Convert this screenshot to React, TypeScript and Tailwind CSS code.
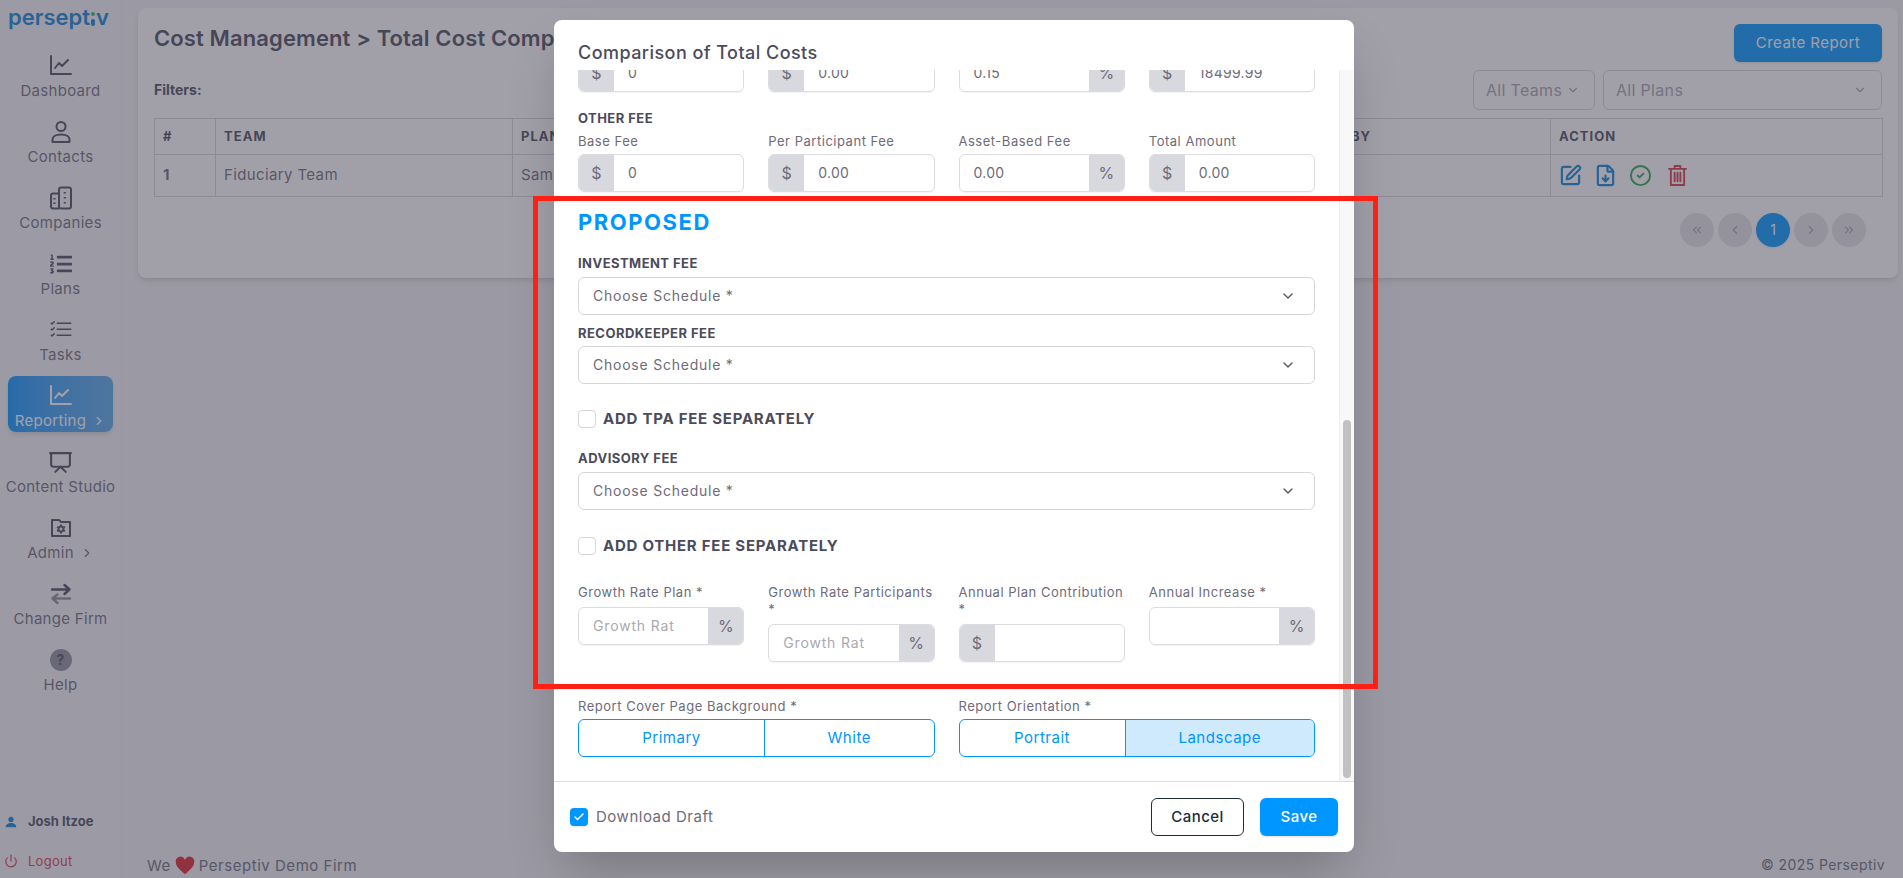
import { ReactNode } from 'react';
import { ChevronDown, ChevronRight, ChevronLeft, ChevronsLeft, ChevronsRight, Check, Power, Presentation, FileDown, CircleCheck, SquarePen } from 'lucide-react';
import { BsListCheck, BsPersonFill } from 'react-icons/bs';
import { FaListOl } from 'react-icons/fa';
import { RiFolderSettingsLine } from 'react-icons/ri';

function ChartIcon() {
  return (
    <svg viewBox="0 0 24 24" className="w-6 h-6" fill="none" stroke="currentColor" strokeWidth="2" strokeLinecap="round" strokeLinejoin="round">
      <path d="M2 2v18h20" />
      <path d="M6 14l4-5 3 3 6-6" />
    </svg>
  );
}

function ContactIcon() {
  return (
    <svg viewBox="0 0 24 24" className="w-6 h-6" fill="none" stroke="currentColor" strokeWidth="2" strokeLinejoin="round">
      <circle cx="12" cy="6.5" r="4.5" />
      <path d="M3.5 22v-2.5c0-3 3.5-5 8.500-5s8.500 2 8.500 5V22Z" />
    </svg>
  );
}

function CompanyIcon() {
  return (
    <svg viewBox="0 0 24 24" className="w-6 h-6" fill="none" stroke="currentColor" strokeWidth="2" strokeLinejoin="round">
      <rect x="10" y="1.500" width="12" height="21" rx="2" />
      <path d="M10 7.500H4a2 2 0 0 0-2 2v11a2 2 0 0 0 2 2h6" />
      <path d="M15.800 6v1.500M15.800 11v1.500M15.800 16v1.500M5.500 12v1.500M5.500 16.500V18" strokeWidth="2.200" />
    </svg>
  );
}

function NavItem({ icon, label, active, arrow }: { icon: ReactNode; label: string; active?: boolean; arrow?: boolean }) {
  return (
    <div className={`mx-2 h-14 flex flex-col items-center pt-2 rounded-lg ${active ? 'bg-gradient-to-r from-[#0096ff] to-[#5aa9e6] text-white shadow-md' : 'text-[#6e6b7b]'}`}>
      <div className={`h-6 flex items-center justify-center ${active ? 'text-white' : 'text-[#4b4b5b]'}`}>{icon}</div>
      <div className="mt-1 text-[15px] leading-[17px] whitespace-nowrap flex items-center tracking-[0.02em]">
        {label}
        {arrow && <ChevronRight className="w-3.5 h-3.5 ml-1.5" />}
      </div>
    </div>
  );
}

function Sidebar() {
  return (
    <aside className="w-[122px] h-full shrink-0 flex flex-col bg-[#f5f5f7] border-r border-[#ebebef]">
      <div className="h-[46px] pl-2 pt-[3px]">
        <div className="flex items-center text-[#0a84d6] text-[22px] leading-[28px] font-semibold">
          persept
          <span className="mx-[1px] flex flex-col gap-[3px] mt-[3px]">
            <span className="w-[4px] h-[4px] rounded-full bg-[#35b26b]" />
            <span className="w-[4px] h-[7px] rounded-sm bg-[#0a84d6]" />
          </span>
          v
        </div>
      </div>
      <nav className="flex flex-col gap-2.5">
        <NavItem icon={<ChartIcon />} label="Dashboard" />
        <NavItem icon={<ContactIcon />} label="Contacts" />
        <NavItem icon={<CompanyIcon />} label="Companies" />
        <NavItem icon={<FaListOl className="w-[22px] h-[22px]" />} label="Plans" />
        <NavItem icon={<BsListCheck className="w-6 h-6" />} label="Tasks" />
        <NavItem icon={<ChartIcon />} label="Reporting" active arrow />
        <NavItem icon={<Presentation className="w-[25px] h-[25px]" strokeWidth={2} />} label="Content Studio" />
        <NavItem icon={<RiFolderSettingsLine className="w-6 h-6" />} label="Admin" arrow />
        <NavItem
          icon={
            <svg viewBox="0 0 24 24" className="w-6 h-6" fill="none" strokeWidth="2.500" strokeLinecap="round" strokeLinejoin="round">
              <path d="M3 7.500h17M15.500 3l5 4.500-5 4.500" stroke="#4b4b5b" />
              <path d="M21 16.500H4M8.500 12.500l-5 4 5 4.500" stroke="#8d8c99" />
            </svg>
          }
          label="Change Firm"
        />
        <NavItem
          icon={<span className="w-[22px] h-[22px] rounded-full bg-[#8f8e9c] text-[#4b4b5b] text-sm font-bold flex items-center justify-center">?</span>}
          label="Help"
        />
      </nav>
      <div className="mt-auto pl-1 pb-[7px]">
        <div className="flex items-center gap-2.5 text-[13px] font-bold text-[#4b4b5b]">
          <BsPersonFill className="w-[14px] h-[14px] text-[#0a84d6]" />
          Josh Itzoe
        </div>
        <div className="mt-5 flex items-center gap-2.5 text-[13px] tracking-[0.02em] text-[#e0364a]">
          <Power className="w-[14px] h-[14px]" />
          Logout
        </div>
      </div>
    </aside>
  );
}

const thClass = 'border border-[#d5d5da] px-2 text-left text-[13px] font-bold tracking-[0.08em] text-[#4b4b5b]';
const tdClass = 'border border-[#d5d5da] px-2 text-[15px] tracking-[0.025em] text-[#6e6b7b]';

function PageDot({ children, active }: { children: ReactNode; active?: boolean }) {
  return (
    <span className={`w-[34px] h-[34px] rounded-full flex items-center justify-center text-sm ${active ? 'bg-[#0096ff] text-white shadow' : 'bg-[#e3e3e7] text-[#a5a5b0]'}`}>
      {children}
    </span>
  );
}

function Report() {
  return (
    <div className="ml-4 mr-[5px] mt-2 h-[270px] bg-white rounded-lg shadow-md px-4 pt-4">
      <div className="h-[38px] flex items-start justify-between">
        <h1 className="text-[22px] leading-[28px] font-semibold tracking-[0.005em] text-[#4b4b5b]">Cost Management &gt; Total Cost Comparison</h1>
        <button className="w-[148px] h-[38px] rounded-md bg-[#0096ff] text-white text-[15px] tracking-[0.03em] shadow">Create Report</button>
      </div>
      <div className="mt-2 h-10 flex items-center">
        <span className="text-sm font-bold text-[#4b4b5b]">Filters:</span>
        <div className="ml-auto w-[122px] h-10 border border-[#d5d5da] rounded-md flex items-center justify-between pl-3 pr-3.5 text-base tracking-[0.02em] text-[#a3a3ac]">
          All Teams <ChevronDown className="w-3.5 h-3.5" />
        </div>
        <div className="ml-2 w-[279px] h-10 border border-[#d5d5da] rounded-md flex items-center justify-between pl-3 pr-3.5 text-base tracking-[0.02em] text-[#a3a3ac]">
          All Plans <ChevronDown className="w-3.5 h-3.5" />
        </div>
      </div>
      <table className="mt-2 w-[1728px] table-fixed border-collapse">
        <colgroup>
          <col className="w-[61px]" />
          <col className="w-[297px]" />
          <col className="w-[758px]" />
          <col className="w-[280px]" />
          <col className="w-[332px]" />
        </colgroup>
        <thead>
          <tr className="h-9">
            <th className={thClass}>#</th>
            <th className={thClass}>TEAM</th>
            <th className={thClass}>PLAN</th>
            <th className={thClass}>CREATED BY</th>
            <th className={thClass}>ACTION</th>
          </tr>
        </thead>
        <tbody>
          <tr className="h-[42px]">
            <td className={`${tdClass} font-bold`}>1</td>
            <td className={tdClass}>Fiduciary Team</td>
            <td className={tdClass}>Sample Plan</td>
            <td className={tdClass}></td>
            <td className={tdClass}>
              <div className="flex items-center gap-3">
                <SquarePen className="w-[23px] h-[23px] text-[#0a84d6]" strokeWidth={2.25} />
                <FileDown className="w-[23px] h-[23px] text-[#0a84d6]" strokeWidth={2.25} />
                <CircleCheck className="w-[23px] h-[23px] text-[#28a745]" strokeWidth={2} />
                <svg viewBox="0 0 20 24" className="ml-1 w-[19px] h-[23px] text-[#dc3545]" fill="none" stroke="currentColor" strokeWidth="2" strokeLinecap="round" strokeLinejoin="round">
                  <path d="M1 5h18M7 5V2h6v3M3 5v17h14V5M7 9v9M10 9v9M13 9v9" />
                </svg>
              </div>
            </td>
          </tr>
        </tbody>
      </table>
      <div className="mt-4 pr-4 flex justify-end gap-1">
        <PageDot><ChevronsLeft className="w-3.5 h-3.5" /></PageDot>
        <PageDot><ChevronLeft className="w-3.5 h-3.5" /></PageDot>
        <PageDot active>1</PageDot>
        <PageDot><ChevronRight className="w-3.5 h-3.5" /></PageDot>
        <PageDot><ChevronsRight className="w-3.5 h-3.5" /></PageDot>
      </div>
    </div>
  );
}

function Addon({ children }: { children: ReactNode }) {
  return <span className="w-[35px] shrink-0 bg-[#d8d9de] flex items-center justify-center text-base text-[#6e6b7b]">{children}</span>;
}

function MoneyInput({ value, placeholder, prefix, suffix }: { value?: string; placeholder?: string; prefix?: string; suffix?: string }) {
  return (
    <div className="h-[38px] flex rounded-md overflow-hidden border border-[#dcdce0] shadow-[0_1px_1px_rgba(0,0,0,0.05)]">
      {prefix && <Addon>{prefix}</Addon>}
      <input
        readOnly
        value={value ?? ''}
        placeholder={placeholder}
        className="min-w-0 flex-1 px-[14px] text-sm tracking-[0.02em] text-[#6e6b7b] placeholder:text-[#a9a9b1] placeholder:tracking-[0.06em] outline-none"
      />
      {suffix && <Addon>{suffix}</Addon>}
    </div>
  );
}

function FeeLabel({ children }: { children: ReactNode }) {
  return <div className="text-[13px] leading-[17px] tracking-[0.04em] text-[#6e6b7b] whitespace-nowrap">{children}</div>;
}

function SectionLabel({ children, className }: { children: ReactNode; className?: string }) {
  return <div className={`text-[13px] leading-[17px] font-bold tracking-[0.035em] text-[#4b4b5b] ${className}`}>{children}</div>;
}

function ScheduleSelect({ className }: { className?: string }) {
  return (
    <div className={`h-[38px] border border-[#d5d5da] rounded-md flex items-center justify-between pl-[14px] pr-[18px] text-sm tracking-[0.055em] text-[#6e6b7b] ${className}`}>
      Choose Schedule *
      <ChevronDown className="w-4 h-4 text-[#55545f]" />
    </div>
  );
}

function SeparateCheck({ label, className }: { label: string; className?: string }) {
  return (
    <label className={`h-[18px] flex items-center gap-[7px] ${className}`}>
      <span className="w-[18px] h-[18px] rounded border border-[#d5d5da]" />
      <span className="text-[15px] font-bold tracking-[0.05em] text-[#4b4b5b]">{label}</span>
    </label>
  );
}

function Segmented({ left, right, leftWidth, active }: { left: string; right: string; leftWidth: string; active?: boolean }) {
  return (
    <div className="mt-1 h-[38px] flex rounded-md border border-[#0096ff] overflow-hidden text-[15px] tracking-[0.035em] text-[#0096ff]">
      <span className={`${leftWidth} shrink-0 flex items-center justify-center`}>{left}</span>
      <span className={`flex-1 flex items-center justify-center border-l border-[#0096ff] ${active ? 'bg-[#cfe9fd]' : ''}`}>{right}</span>
    </div>
  );
}

function Modal() {
  return (
    <div className="w-[800px] h-[832px] bg-white rounded-lg shadow-2xl flex flex-col overflow-hidden">
      <div className="h-[50px] shrink-0 pl-6 pt-[22px] text-[18px] leading-[22px] font-medium tracking-[0.025em] text-[#4b4b5b]">Comparison of Total Costs</div>
      <div className="flex-1 min-h-0 flex">
        <div className="flex-1 min-w-0 overflow-hidden pl-6 pr-6">
          <div className="-mt-4 grid grid-cols-4 gap-x-6">
            <MoneyInput prefix="$" value="0" />
            <MoneyInput prefix="$" value="0.00" />
            <MoneyInput suffix="%" value="0.15" />
            <MoneyInput prefix="$" value="18499.99" />
          </div>
          <SectionLabel className="mt-[18px]">OTHER FEE</SectionLabel>
          <div className="mt-1.5 grid grid-cols-4 gap-x-6">
            {[
              { label: 'Base Fee', prefix: '$', value: '0' },
              { label: 'Per Participant Fee', prefix: '$', value: '0.00' },
              { label: 'Asset-Based Fee', suffix: '%', value: '0.00' },
              { label: 'Total Amount', prefix: '$', value: '0.00' },
            ].map((f) => (
              <div key={f.label}>
                <FeeLabel>{f.label}</FeeLabel>
                <div className="mt-1">
                  <MoneyInput prefix={f.prefix} suffix={f.suffix} value={f.value} />
                </div>
              </div>
            ))}
          </div>
          <h2 className="mt-4 text-[22px] leading-7 font-bold tracking-[0.07em] text-[#0096ff]">PROPOSED</h2>
          <SectionLabel className="mt-[19px]">INVESTMENT FEE</SectionLabel>
          <ScheduleSelect className="mt-[5px]" />
          <SectionLabel className="mt-2.5">RECORDKEEPER FEE</SectionLabel>
          <ScheduleSelect className="mt-1" />
          <SeparateCheck className="mt-[26px]" label="ADD TPA FEE SEPARATELY" />
          <SectionLabel className="mt-[22px]">ADVISORY FEE</SectionLabel>
          <ScheduleSelect className="mt-[5px]" />
          <SeparateCheck className="mt-[27px]" label="ADD OTHER FEE SEPARATELY" />
          <div className="mt-[29px] grid grid-cols-4 gap-x-6 items-start">
            <div>
              <FeeLabel>Growth Rate Plan *</FeeLabel>
              <div className="mt-1.5"><MoneyInput suffix="%" placeholder="Growth Rat" /></div>
            </div>
            <div>
              <FeeLabel>Growth Rate Participants<br />*</FeeLabel>
              <div className="mt-1.5"><MoneyInput suffix="%" placeholder="Growth Rat" /></div>
            </div>
            <div>
              <FeeLabel>Annual Plan Contribution<br />*</FeeLabel>
              <div className="mt-1.5"><MoneyInput prefix="$" /></div>
            </div>
            <div>
              <FeeLabel>Annual Increase *</FeeLabel>
              <div className="mt-1.5"><MoneyInput suffix="%" /></div>
            </div>
          </div>
          <div className="mt-9 grid grid-cols-2 gap-x-6">
            <div>
              <FeeLabel>Report Cover Page Background *</FeeLabel>
              <Segmented left="Primary" right="White" leftWidth="w-[185px]" />
            </div>
            <div>
              <FeeLabel>Report Orientation *</FeeLabel>
              <Segmented left="Portrait" right="Landscape" leftWidth="w-[165px]" active />
            </div>
          </div>
        </div>
        <div className="w-[15px] shrink-0 bg-[#f8f8f8] border-l border-[#eeeeee] pt-[350px] pb-[3px] flex justify-center">
          <div className="w-2 h-full rounded bg-[#c1c1c1]" />
        </div>
      </div>
      <div className="h-[71px] shrink-0 border-t border-[#dddddd] px-4 flex items-center">
        <span className="w-[18px] h-[18px] rounded bg-[#0096ff] flex items-center justify-center shadow">
          <Check className="w-3 h-3 text-white" strokeWidth={3} />
        </span>
        <span className="ml-2 text-[15px] tracking-[0.035em] text-[#6e6b7b]">Download Draft</span>
        <button className="ml-auto w-[93px] h-[38px] rounded-md border border-[#1b2d3c] text-[15px] font-medium tracking-[0.03em] text-[#1b2d3c]">Cancel</button>
        <button className="ml-4 w-[78px] h-[38px] rounded-md bg-[#0096ff] text-[15px] font-medium tracking-[0.03em] text-white shadow">Save</button>
      </div>
    </div>
  );
}

export default function App() {
  return (
    <div className="relative w-[1903px] h-[878px] overflow-hidden flex bg-[#f2f2f4] [font-family:Inter,sans-serif]">
      <Sidebar />
      <main className="flex-1 min-w-0 flex flex-col">
        <Report />
        <footer className="mt-auto h-[23px] pl-[25px] pr-[18px] flex items-start justify-between text-sm tracking-[0.03em] text-[#6e6b7b]">
          <span className="flex items-center gap-1 text-[15px] tracking-[0.035em]">
            We
            <svg viewBox="0 0 24 24" className="w-[20px] h-[20px]" fill="#e0202a">
              <path d="M12 22C5 16 1 12 1 7.500A5.500 5.500 0 0 1 12 5a5.500 5.500 0 0 1 11 2.500C23 12 19 16 12 22Z" />
            </svg>
            Perseptiv Demo Firm
          </span>
          <span>© 2025 Perseptiv</span>
        </footer>
      </main>
      <div className="absolute inset-0 bg-[#434153]/50 flex justify-center items-start pt-5 pl-[5px]">
        <Modal />
      </div>
      <div className="absolute left-[533px] top-[196px] w-[845px] h-[493px] border-[5px] border-[#ff2015] pointer-events-none" />
    </div>
  );
}
